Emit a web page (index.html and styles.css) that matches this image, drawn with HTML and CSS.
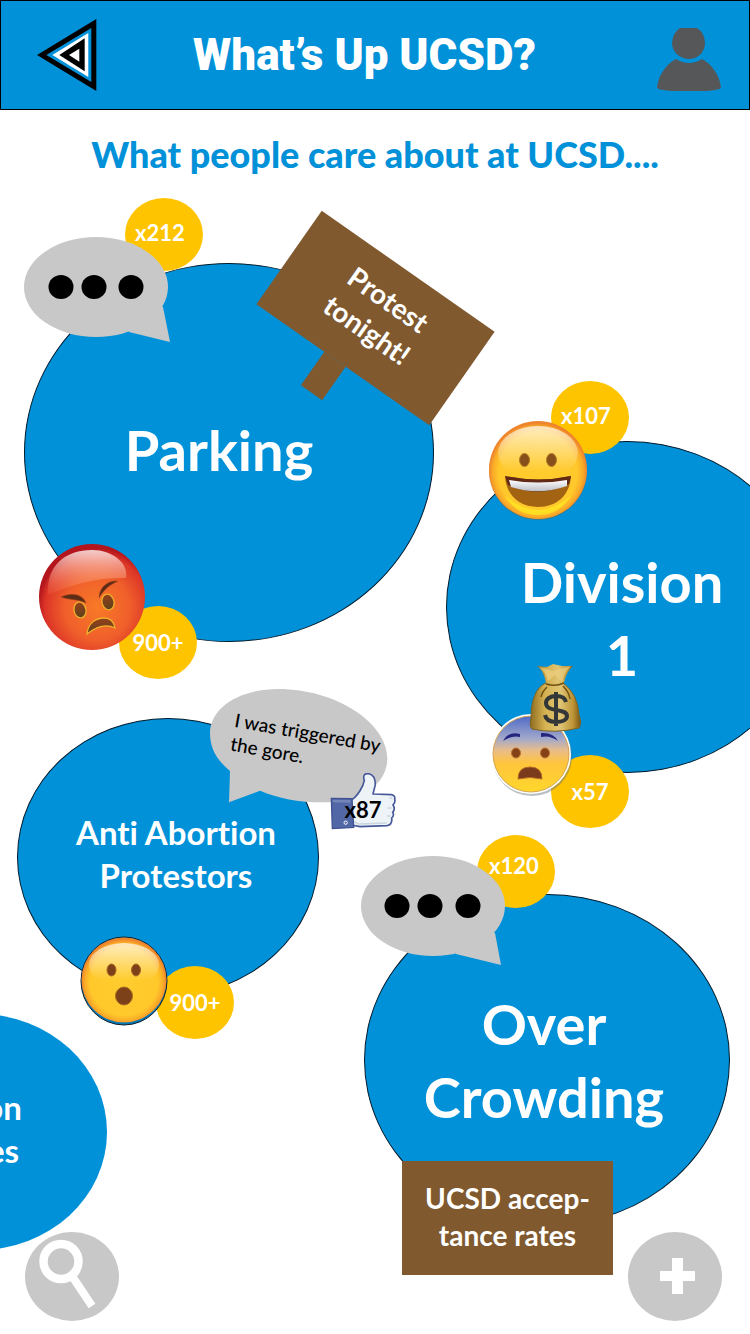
FILE: index.html
```html
<!DOCTYPE html>
<html lang="en">
<head>
<meta charset="utf-8">
<meta name="viewport" content="width=device-width, initial-scale=1">
<title>What’s Up UCSD?</title>
<link rel="stylesheet" href="styles.css">
</head>
<body>
<header class="topbar">
  <button class="icon-button" type="button" aria-label="Back">
    <svg width="60" height="72" viewBox="110 57 180 216" aria-hidden="true">
      <path fill="#000" d="M110 165 288 57V273Z"/>
      <path fill="#0091d9" d="M138 165 273 84V246Z"/>
      <path fill="#fff" d="M156 165 264 99V231Z"/>
      <path fill="#000" d="M177 165 253 115V214Z"/>
      <path fill="#fff" d="M206 165 237 146V185Z"/>
    </svg>
  </button>
  <h1 class="title">What’s Up UCSD?</h1>
  <button class="icon-button" type="button" aria-label="Profile">
    <svg width="66" height="72" viewBox="0 -8 66 72" aria-hidden="true" fill="#565759">
      <path d="M24 1H41Q49 6 49 16C49 25 42 32 33 32S16 25 16 16Q17 5 24 1Z"/>
      <path d="M20 32Q33 40 46 32C56 37 64 49 65 61Q63 63 50 64H16Q3 63 1 61C2 49 10 37 20 32Z"/>
    </svg>
  </button>
</header>

<main>
  <h2 class="subtitle">What people care about at UCSD....</h2>

  <div class="canvas">
    <article class="topic parking">
      <h3 class="topic-name large">Parking</h3>
      <span class="badge">x212</span>
      <svg class="speech" width="146" height="110" viewBox="0 0 146 110" role="img" aria-label="Comments">
        <g fill="#c8c8c8"><ellipse cx="72" cy="50" rx="72" ry="50"/><path d="M139 70 146 105 105 95 110 60Z"/></g>
        <ellipse cx="37" cy="50" rx="12.5" ry="12"/><ellipse cx="70" cy="50" rx="12.5" ry="12"/><ellipse cx="107" cy="50" rx="12.5" ry="12"/>
      </svg>
      <p class="sign tilted">Protest<br>tonight!</p>
      <span class="badge low">900+</span>
      <svg class="emoji" width="108" height="108" viewBox="0 0 108 108" role="img" aria-label="Angry">
        <defs>
          <radialGradient id="angry" cx=".55" cy=".6" r=".56"><stop offset="0" stop-color="#f77a27"/><stop offset=".55" stop-color="#f05f2b"/><stop offset=".88" stop-color="#dc3527"/><stop offset="1" stop-color="#b3151c"/></radialGradient>
          <linearGradient id="angryShine" x2="0" y2="1"><stop offset="0" stop-color="#fff" stop-opacity=".78"/><stop offset="1" stop-color="#ff8b60" stop-opacity=".12"/></linearGradient>
          <linearGradient id="iris" x2="0" y2="1"><stop offset="0" stop-color="#96401b"/><stop offset="1" stop-color="#5d421c"/></linearGradient>
        </defs>
        <circle cx="54" cy="54" r="53" fill="url(#angry)"/>
        <path d="M10 52C8 22 28 7 54 7C74 7 91 20 88 35C63 34 37 40 10 52Z" fill="url(#angryShine)"/>
        <g fill="url(#iris)" stroke="#eeb22d" stroke-width="1.3">
          <ellipse cx="42" cy="67" rx="6" ry="8" transform="rotate(-10 42 67)"/><ellipse cx="70" cy="59" rx="6" ry="8" transform="rotate(-15 70 59)"/>
          <path d="M49 91C50 80 58 75 66 75C72 75 76 79 77 85C67 80 58 84 49 91Z"/>
        </g>
        <g fill="#5c2c16" stroke="#aa461d" stroke-width=".6"><path d="M23 54C33 49 45 51 48 60C40 56 31 57 23 54Z"/><path d="M61 55C61 45 69 37 80 38C72 42 67 45 61 55Z"/></g>
      </svg>
    </article>

    <article class="topic division">
      <h3 class="topic-name large">Division<br>1</h3>
      <span class="badge">x107</span>
      <svg class="emoji" width="100" height="100" viewBox="0 0 100 100" role="img" aria-label="Grinning">
        <defs>
          <radialGradient id="face" cx=".5" cy=".52" r=".5"><stop offset="0" stop-color="#ffcc2d"/><stop offset=".8" stop-color="#ffc82b"/><stop offset=".92" stop-color="#fbac27"/><stop offset="1" stop-color="#ee842c"/></radialGradient>
          <linearGradient id="shine" x2="0" y2="1"><stop offset="0" stop-color="#fff" stop-opacity=".7"/><stop offset=".85" stop-color="#fff" stop-opacity="0"/></linearGradient>
          <linearGradient id="teeth" x2="0" y2="1"><stop offset="0" stop-color="#fff"/><stop offset="1" stop-color="#bdbfc6"/></linearGradient>
        </defs>
        <circle cx="50" cy="51" r="49" fill="#7d6434" opacity=".5"/>
        <circle cx="50" cy="50" r="49" fill="url(#face)"/>
        <path d="M16 75Q50 105 84 75Q70 96 50 95Q29 96 16 75Z" fill="#ffee20" opacity=".65"/>
        <ellipse cx="50" cy="33" rx="40" ry="27" fill="url(#shine)"/>
        <g fill="#87501a" stroke="#b57a22"><ellipse cx="36.500" cy="40" rx="5" ry="6.500"/><ellipse cx="63.500" cy="40" rx="5" ry="6.500"/></g>
        <path d="M17 56Q50 63 83 56C82 75 69 87 50 87S18 75 17 56Z" fill="#a26412"/>
        <path d="M17 56Q50 63 83 56L81 64Q50 79 20 65Z" fill="#622a14"/>
        <path d="M21 60Q50 65 79 60V66Q50 76 23 67Z" fill="url(#teeth)"/>
      </svg>
      <span class="badge low">x57</span>
      <svg class="worried" width="92" height="136" viewBox="0 0 92 136" role="img" aria-label="Worried, money">
        <defs>
          <linearGradient id="cold" x2="0" y2="1"><stop offset="0" stop-color="#4f6ac8"/><stop offset=".3" stop-color="#a3a9ca"/><stop offset=".45" stop-color="#e8bc8b"/><stop offset=".62" stop-color="#ffc43d"/><stop offset="1" stop-color="#ffd72a"/></linearGradient>
          <linearGradient id="gold"><stop offset="0" stop-color="#8e6c20"/><stop offset=".3" stop-color="#d6b352"/><stop offset=".6" stop-color="#dfc474"/><stop offset=".85" stop-color="#bd9435"/><stop offset="1" stop-color="#795716"/></linearGradient>
        </defs>
        <circle cx="41" cy="93" r="40" fill="#66717b" opacity=".45"/>
        <circle cx="40" cy="91" r="40" fill="#fff"/>
        <circle cx="40" cy="91" r="38" fill="url(#cold)" stroke="#d5a451"/>
        <g fill="#25247f"><path d="M12 78Q17 68 29 71L29 74Q21 72 12 78Z"/><path d="M50 70Q62 69 67 78Q59 72 50 74Z"/></g>
        <g fill="#844116" stroke="#ba7230"><ellipse cx="25" cy="90" rx="4.500" ry="5"/><ellipse cx="54" cy="90" rx="4.500" ry="5"/></g>
        <path d="M27 116Q27 104 39 104Q51 104 51 116Q39 113 27 116Z" fill="#793b1b" stroke="#b66924"/>
        <path d="M55 20C45 24 40 37 40 55Q38 63 41 66Q64 71 88 65Q91 61 88 52Q87 31 72 20Z" fill="url(#gold)" stroke="#806321"/>
        <path d="M46 3 56 4 62 1 71 3 82 3Q75 9 73 20Q64 22 55 20Q53 8 46 3Z" fill="url(#gold)"/>
        <path d="M48 4 62 8 80 3Q73 9 71 19L64 12 57 18Q54 8 48 4Z" fill="#edce80" opacity=".7"/>
        <path d="M55 21Q64 24 73 20M56 24Q51 29 50 34M72 23Q78 29 79 36" fill="none" stroke="#705010" stroke-width="1.500"/>
        <path d="M75 39C74 34 70 33 65 33C59 33 55 36 55 40C55 45 60 46 65 47C71 48 76 49 76 53C76 57 71 59 65 59C59 59 55 57 54 52M65 29V63" fill="none" stroke="#333738" stroke-width="4"/>
      </svg>
    </article>

    <article class="topic abortion">
      <h3 class="topic-name small">Anti Abortion<br>Protestors</h3>
      <svg class="quote-shape" width="178" height="114" viewBox="60 57 534 342" aria-hidden="true">
        <path fill="#c8c8c8" d="M120 303C80 270 60 235 60 190C60 115 145 57 265 57C440 57 592 160 592 265C592 345 510 397 395 397C325 397 265 385 210 362L117 397Z"/>
      </svg>
      <p class="quote">I was triggered by<br>the gore.</p>
      <div class="likes">
        <svg width="66" height="57" viewBox="420 310 198 171" aria-hidden="true">
          <path fill="#edf3f7" stroke="#47599a" stroke-width="5" stroke-linejoin="round" d="M484 391C503 380 520 350 523 332C518 318 523 311 536 312C551 315 556 331 556 345L549 373 604 375Q617 377 614 389 617 399 609 406 617 418 608 428 614 437 605 445 608 465 591 468L510 471 484 466Z"/>
          <path fill="none" stroke="#cbd6e1" stroke-width="5" d="M490 455 505 463 590 460M598 384 607 386M593 415H605M592 438 601 440"/>
          <path fill="#5267a5" stroke="#405294" stroke-width="4" d="M424 386 486 387 491 473 427 477Z"/>
          <path fill="#7384b7" d="M428 390 482 391V399L429 398Z"/>
          <circle cx="467" cy="459" r="5" fill="#5267a5" stroke="#fff" stroke-width="3"/>
        </svg>
        <span class="likes-count">x87</span>
      </div>
      <span class="badge low">900+</span>
      <svg class="emoji" width="88" height="90" viewBox="0 0 88 90" role="img" aria-label="Surprised">
        <ellipse cx="44" cy="45" rx="43" ry="44" fill="#0079ba" stroke="#111c25"/>
        <circle cx="44" cy="44" r="42.500" fill="url(#face)"/>
        <ellipse cx="44" cy="29" rx="35" ry="22" fill="url(#shine)"/>
        <g fill="#7c4119" stroke="#aa6a20"><ellipse cx="31.500" cy="34" rx="4.500" ry="6"/><ellipse cx="56" cy="34" rx="4.500" ry="6"/><ellipse cx="44" cy="60" rx="8.500" ry="9"/></g>
      </svg>
    </article>

    <article class="topic crowding">
      <h3 class="topic-name large">Over<br>Crowding</h3>
      <span class="badge">x120</span>
      <svg class="speech" width="146" height="110" viewBox="0 0 146 110" role="img" aria-label="Comments">
        <g fill="#c8c8c8"><ellipse cx="72" cy="50" rx="72" ry="50"/><path d="M134 77 140 109 95 98 100 60Z"/></g>
        <ellipse cx="36" cy="50" rx="12.500" ry="12"/><ellipse cx="69" cy="50" rx="12.500" ry="12"/><ellipse cx="107" cy="50" rx="12.500" ry="12"/>
      </svg>
      <p class="sign flat">UCSD accep-<br>tance rates</p>
    </article>

    <article class="topic offscreen">
      <h3 class="topic-name small">on<br>es</h3>
    </article>

    <button class="round-button search" type="button" aria-label="Search">
      <svg width="94" height="89" viewBox="0 0 94 89" aria-hidden="true" fill="none" stroke="#fff">
        <circle cx="36" cy="29.500" r="17.500" stroke-width="8.500"/><path d="M47 44 67 74" stroke-width="8"/>
      </svg>
    </button>
    <button class="round-button add" type="button" aria-label="Add topic">
      <svg width="94" height="89" viewBox="0 0 94 89" aria-hidden="true">
        <path fill="#fff" d="M44 26H55V39H67V49H55V62H44V49H32V39H44Z"/>
      </svg>
    </button>
  </div>
</main>
</body>
</html>
```
FILE: styles.css
```css
* {
  box-sizing: border-box;
}

body {
  margin: 0;
  background: #fff;
  color: #fff;
  font-family: Lato, "Open Sans", sans-serif;
  font-weight: 700;
  font-variant-ligatures: none;
}

h1, h2, h3, p {
  margin: 0;
}

button {
  padding: 0;
  border: 0;
  background: none;
  cursor: pointer;
}

svg {
  display: block;
}

/* Header */
.topbar {
  display: flex;
  align-items: center;
  justify-content: space-between;
  min-height: 110px;
  padding: 0 27px 0 36px;
  border: 1px solid #000;
  background: #0091d9;
}

.icon-button {
  flex: none;
}

.title {
  padding-right: 24px;
  font-family: Impact, Roboto, sans-serif;
  font-size: 44px;
  font-weight: 900;
  line-height: 56px;
  white-space: nowrap;
}

.subtitle {
  padding: 24px 0 16px;
  color: #0091d9;
  font-size: 36px;
  font-weight: 900;
  line-height: 40px;
  text-align: center;
}

/* Bubble canvas: topics are pinned around its centre line */
.canvas {
  position: relative;
  height: 1144px;
  overflow: hidden;
}

.topic {
  position: absolute;
  display: flex;
  align-items: center;
  justify-content: center;
  border: 1px solid #001a2b;
  border-radius: 50%;
  background: #0091d9;
}

.topic-name {
  font-weight: 700;
  text-align: center;
  white-space: nowrap;
}

.large {
  font-size: 56px;
  line-height: 73px;
}

.small {
  font-size: 33px;
  line-height: 43px;
}

.parking {
  top: 73px;
  left: calc(50% - 351px);
  width: 410px;
  height: 379px;
  padding: 0 20px 6px 0;
}

.division {
  top: 251px;
  left: calc(50% + 71px);
  width: 362px;
  height: 332px;
  padding: 22px 10px 0 0;
}

.abortion {
  top: 528px;
  left: calc(50% - 358px);
  width: 302px;
  height: 278px;
  padding: 0 0 6px 16px;
}

.crowding {
  top: 704px;
  left: calc(50% - 11px);
  width: 366px;
  height: 332px;
  padding-right: 6px;
}

.offscreen {
  top: 824px;
  left: calc(50% - 524px);
  width: 256px;
  height: 236px;
  padding: 0 0 6px 48px;
  border: 0;
}

/* Count badges */
.badge {
  position: absolute;
  display: flex;
  align-items: center;
  justify-content: center;
  width: 78px;
  height: 73px;
  padding: 0 8px 4px 0;
  border-radius: 50%;
  background: #ffc400;
  font-size: 22px;
}

.badge.low {
  padding: 0;
}

.parking .badge {
  top: -66px;
  left: 100px;
}

.parking .badge.low {
  top: 342px;
  left: 94px;
}

.division .badge {
  top: -61px;
  left: 104px;
}

.division .badge.low {
  top: 313px;
  left: 104px;
}

.abortion .badge.low {
  top: 247px;
  left: 138px;
}

.crowding .badge {
  top: -60px;
  left: 112px;
  padding: 0 4px 12px 0;
}

/* Stickers */
.speech,
.emoji,
.worried,
.quote-shape,
.likes {
  position: absolute;
}

.parking .speech {
  top: -27px;
  left: -1px;
}

.crowding .speech {
  top: -39px;
  left: -4px;
}

.parking .emoji {
  top: 279px;
  left: 13px;
}

.division .emoji {
  top: -22px;
  left: 41px;
}

.abortion .emoji {
  top: 217px;
  left: 62px;
}

.worried {
  top: 221px;
  left: 44px;
}

.quote-shape {
  top: -30px;
  left: 192px;
}

.quote {
  position: absolute;
  top: -11px;
  left: 219px;
  color: #000;
  font-size: 19px;
  font-weight: 500;
  line-height: 24px;
  white-space: nowrap;
  transform: rotate(10deg);
  transform-origin: 0 0;
}

.likes {
  top: 54px;
  left: 312px;
  display: grid;
  align-items: end;
  justify-items: center;
  color: #000;
  font-size: 22px;
  line-height: 40px;
}

.likes svg,
.likes-count {
  grid-area: 1 / 1;
}

/* Signs */
.sign {
  position: absolute;
  width: 211px;
  height: 114px;
  padding-top: 19px;
  background: #80592f;
  font-size: 28px;
  line-height: 37px;
  text-align: center;
}

.tilted {
  top: -3px;
  left: 245px;
  padding-top: 16px;
  transform: rotate(35deg);
}

.tilted::after {
  content: "";
  position: absolute;
  top: 114px;
  left: 83px;
  width: 26px;
  height: 41px;
  background: #80592f;
}

.flat {
  top: 266px;
  left: 37px;
}

/* Floating actions */
.round-button {
  position: absolute;
  bottom: 13px;
  border-radius: 50%;
  background: #c8c8c8;
}

.search {
  left: 25px;
}

.add {
  right: 28px;
}
```
